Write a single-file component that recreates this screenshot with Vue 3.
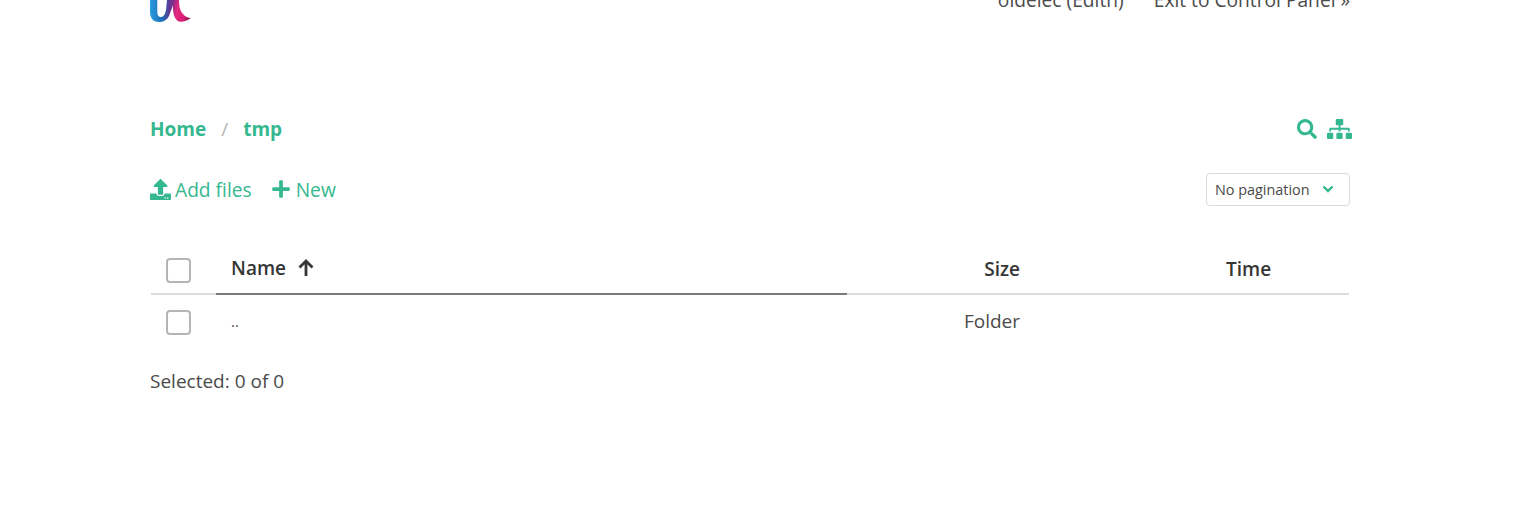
<script setup>
const pagination = 'No pagination'
</script>

<template>
  <div class="page">
    <header class="top">
      <svg class="logo" viewBox="0 0 42 64" width="42" height="64">
        <defs>
          <linearGradient id="lb" x1="0" y1="0" x2="1" y2="0">
            <stop offset="0" stop-color="#2a9ce0" />
            <stop offset="0.5" stop-color="#1a6eb8" />
            <stop offset="0.75" stop-color="#5b3b98" />
            <stop offset="1" stop-color="#8a2a86" />
          </linearGradient>
          <linearGradient id="lp" x1="0" y1="0" x2="1" y2="0.300">
            <stop offset="0" stop-color="#8c2a80" />
            <stop offset="0.35" stop-color="#e3287f" />
            <stop offset="0.8" stop-color="#d81b74" />
            <stop offset="1" stop-color="#8f1a50" />
          </linearGradient>
        </defs>
        <path d="M23 42 L29 42 C29 48 30 53 33 56 C35 58.500 38 60 41 60 C37 63 32 64.500 29 63.500 C25 62 23.500 57 23 52 Z" fill="url(#lp)" />
        <path d="M0 42 L7.300 42 L7.300 54 C7.300 58 9 59 11 59 C14 59 15 56 16 52 L17 42 L25 42 L19 58 C17 62 13 64 9 64 C3 64 0 60 0 54 Z" fill="url(#lb)" />
      </svg>
      <nav class="user">
        <span>oldelec (Edith)</span>
        <a>Exit to Control Panel »</a>
      </nav>
    </header>

    <div class="crumbs-row">
      <div class="crumbs">
        <a>Home</a>
        <span class="sep">/</span>
        <a>tmp</a>
      </div>
      <div class="tools">
        <svg viewBox="0 0 512 512" width="20" height="20"><path fill="#35b88f" d="M505 442.700L405.300 343c-4.500-4.500-10.600-7-17-7H372c27.600-35.300 44-79.700 44-128C416 93.100 322.900 0 208 0S0 93.100 0 208s93.100 208 208 208c48.300 0 92.700-16.400 128-44v16.300c0 6.400 2.500 12.500 7 17l99.700 99.700c9.400 9.400 24.600 9.400 33.900 0l28.300-28.300c9.400-9.400 9.400-24.600.1-34zM208 336c-70.700 0-128-57.200-128-128 0-70.700 57.200-128 128-128 70.700 0 128 57.200 128 128 0 70.700-57.200 128-128 128z"/></svg>
        <svg viewBox="0 0 640 512" width="25" height="20"><path fill="#35b88f" d="M128 352H32c-17.670 0-32 14.330-32 32v96c0 17.670 14.330 32 32 32h96c17.670 0 32-14.330 32-32v-96c0-17.670-14.330-32-32-32zm-24-80h192v48h48v-48h192v48h48v-57.590c0-21.170-17.230-38.410-38.410-38.410H344v-64h40c17.670 0 32-14.330 32-32V32c0-17.670-14.330-32-32-32H256c-17.670 0-32 14.330-32 32v96c0 17.670 14.330 32 32 32h40v64H94.410C73.230 224 56 241.230 56 262.410V320h48v-48zm264 80h-96c-17.670 0-32 14.330-32 32v96c0 17.670 14.330 32 32 32h96c17.670 0 32-14.330 32-32v-96c0-17.670-14.330-32-32-32zm240 0h-96c-17.670 0-32 14.330-32 32v96c0 17.670 14.330 32 32 32h96c17.670 0 32-14.330 32-32v-96c0-17.670-14.330-32-32-32z"/></svg>
      </div>
    </div>

    <div class="actions">
      <div class="links">
        <a class="act">
          <svg viewBox="0 0 512 512" width="21" height="21"><path fill="#35b88f" d="M296 384h-80c-13.300 0-24-10.700-24-24V192h-87.700c-17.800 0-26.700-21.500-14.100-34.100L242.300 5.700c7.500-7.500 19.800-7.500 27.300 0l152.200 152.200c12.600 12.600 3.700 34.100-14.100 34.100H320v168c0 13.300-10.700 24-24 24zm216-8v112c0 13.300-10.700 24-24 24H24c-13.300 0-24-10.700-24-24V376c0-13.300 10.700-24 24-24h136v8c0 30.900 25.100 56 56 56h80c30.900 0 56-25.100 56-56v-8h136c13.300 0 24 10.700 24 24zm-124 88c0-11-9-20-20-20s-20 9-20 20 9 20 20 20 20-9 20-20zm64 0c0-11-9-20-20-20s-20 9-20 20 9 20 20 20 20-9 20-20z"/></svg>
          <span>Add files</span>
        </a>
        <a class="act act-new">
          <svg viewBox="0 0 448 512" width="18" height="20"><path fill="#35b88f" d="M416 208H272V64c0-17.670-14.330-32-32-32h-32c-17.670 0-32 14.330-32 32v144H32c-17.670 0-32 14.330-32 32v32c0 17.670 14.330 32 32 32h144v144c0 17.670 14.330 32 32 32h32c17.670 0 32-14.330 32-32V304h144c17.670 0 32-14.330 32-32v-32c0-17.670-14.330-32-32-32z"/></svg>
          <span>New</span>
        </a>
      </div>
      <div class="select">
        <span>{{ pagination }}</span>
        <svg viewBox="0 0 12 8" width="12" height="8"><path d="M1.500 1.500 L6 6 L10.500 1.500" fill="none" stroke="#35b88f" stroke-width="2.400" /></svg>
      </div>
    </div>

    <div class="table">
      <div class="row head">
        <div class="c-check"><span class="box"></span></div>
        <div class="c-name sorted">
          <b>Name</b>
          <svg viewBox="0 0 18 18" width="18" height="18"><path d="M9 17 V2 M2.500 8.500 L9 2 L15.500 8.500" fill="none" stroke="#363636" stroke-width="2.800" /></svg>
        </div>
        <div class="c-size"><b>Size</b></div>
        <div class="c-time"><b>Time</b></div>
      </div>
      <div class="row body">
        <div class="c-check"><span class="box"></span></div>
        <div class="c-name dots">..</div>
        <div class="c-size">Folder</div>
        <div class="c-time"></div>
      </div>
    </div>

    <p class="selected">Selected: 0 of 0</p>
  </div>
</template>

<style>
html, body { margin: 0; height: 507px; overflow: hidden; background: #fff; }
</style>

<style scoped>
.page {
  width: 1200px;
  margin: -40px 0 0 150px;
  font-family: "Open Sans", "Noto Sans", sans-serif;
  font-size: 19px;
  color: #4a4a4a;
}
.top {
  height: 62px;
  display: flex;
  justify-content: space-between;
  align-items: flex-start;
}
.logo { flex: none; margin-top: -2px; }
.user {
  display: flex;
  gap: 30px;
  margin-top: 28px;
  line-height: 24px;
  font-size: 19.200px;
}
.crumbs-row {
  margin-top: 93px;
  height: 28px;
  display: flex;
  justify-content: space-between;
  align-items: center;
}
.crumbs {
  display: flex;
  align-items: center;
  color: #35b88f;
  font-weight: 700;
}
.sep { color: #b5b5b5; font-weight: 400; margin: 0 15px; }
.tools { display: flex; align-items: center; gap: 10px; margin-right: -2px; }
.actions {
  margin-top: 29px;
  height: 34px;
  display: flex;
  justify-content: space-between;
  align-items: center;
}
.links { display: flex; gap: 20px; }
.act {
  display: flex;
  align-items: center;
  gap: 4px;
  color: #35b88f;
  font-size: 19.200px;
}
.act-new { gap: 6px; }
.select {
  box-sizing: border-box;
  width: 144px;
  height: 33px;
  border: 1px solid #dbdbdb;
  border-radius: 4px;
  padding: 0 15px 0 8px;
  display: flex;
  justify-content: space-between;
  align-items: center;
  font-size: 14.400px;
  color: #4a4a4a;
}
.table { margin-top: 39px; padding: 0 1px; }
.row { display: flex; }
.head { height: 48px; border-bottom: 2px solid #dbdbdb; color: #363636; }
.head > div { height: 50px; box-sizing: border-box; }
.body { height: 54px; }
.row > div { display: flex; align-items: center; }
.c-check { width: 65px; padding-left: 15px; box-sizing: border-box; }
.c-name { width: 631px; padding-left: 15px; box-sizing: border-box; gap: 11px; }
.c-size { width: 173px; justify-content: flex-end; }
.c-time { width: 250px; padding-left: 206px; box-sizing: border-box; }
.sorted { border-bottom: 2px solid #7a7a7a; }
.head .c-name, .head .c-size, .head .c-time { padding-bottom: 3px; }
.head b { font-weight: 600; }
.body > div:not(.c-check) { padding-bottom: 2px; }
.box {
  width: 25px;
  height: 25px;
  box-sizing: border-box;
  border: 2px solid #b5b5b5;
  border-radius: 4px;
  display: block;
}
.dots { font-size: 15px; }
.selected { margin: 19px 0 0; line-height: 27px; }
</style>
